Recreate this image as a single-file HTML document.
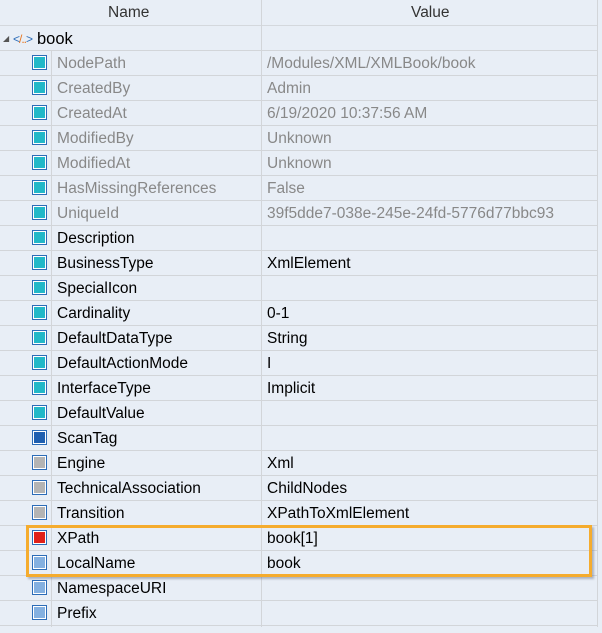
<!DOCTYPE html><html><head><style>
body{margin:0;width:602px;height:633px;background:#e8eef6;font-family:"Segoe UI","Liberation Sans",sans-serif;font-size:15.5px;position:relative;overflow:hidden}
.hd{position:absolute;top:0;left:0;width:597px;height:25px;border-bottom:1px solid #d4d8dd}
.hd div{position:absolute;top:0;line-height:25px;color:#333}
.r{position:absolute;left:0;width:597px;height:24px;border-bottom:1px solid #d2d5d9}
.n{position:absolute;left:57px;top:0;line-height:26px}
.v{position:absolute;left:267px;top:0;line-height:26px}
.g{color:#888}
.i{position:absolute;left:32px;top:4px;width:11px;height:11px;border:1px solid #2c6cb8;background:#fff;padding:1px}
.i b{display:block;width:11px;height:11px}
.vl{position:absolute;top:0;width:1px;background:#d2d5d9}
</style></head><body>
<div class="hd"><div style="left:108px">Name</div><div style="left:411px">Value</div></div>
<div class="vl" style="left:261px;height:627px"></div>
<div class="vl" style="left:597px;height:627px"></div>
<div class="vl" style="left:51px;top:51px;height:576px"></div>
<div class="r" style="top:26px"><span style="position:absolute;left:3px;top:8px;font-size:8px;color:#555">◢</span><span style="position:absolute;left:13px;top:0;line-height:26px;font-size:12px;letter-spacing:-1px;color:#2c6cb8">&lt;<span style="color:#e87722">/..</span>&gt;</span><span style="position:absolute;left:37px;top:0;line-height:27px;font-size:16.5px">book</span></div>
<div id="rows"></div>
<div style="position:absolute;left:26px;top:525px;width:560px;height:46px;border:3px solid #f5ac2e;box-shadow:2px 2px 2px rgba(80,90,110,.4)"></div>
<script>
var d=[["NodePath","/Modules/XML/XMLBook/book","#22b8c8",1],["CreatedBy","Admin","#22b8c8",1],["CreatedAt","6/19/2020 10:37:56 AM","#22b8c8",1],["ModifiedBy","Unknown","#22b8c8",1],["ModifiedAt","Unknown","#22b8c8",1],["HasMissingReferences","False","#22b8c8",1],["UniqueId","39f5dde7-038e-245e-24fd-5776d77bbc93","#22b8c8",1],["Description","","#22b8c8"],["BusinessType","XmlElement","#22b8c8"],["SpecialIcon","","#22b8c8"],["Cardinality","0-1","#22b8c8"],["DefaultDataType","String","#22b8c8"],["DefaultActionMode","I","#22b8c8"],["InterfaceType","Implicit","#22b8c8"],["DefaultValue","","#22b8c8"],["ScanTag","","#1f5fb0"],["Engine","Xml","#b4b4b4"],["TechnicalAssociation","ChildNodes","#b4b4b4"],["Transition","XPathToXmlElement","#b4b4b4"],["XPath","book[1]","#e0201a"],["LocalName","book","#84b0e0"],["NamespaceURI","","#84b0e0"],["Prefix","","#84b0e0"]];
var h="";d.forEach(function(x,k){h+='<div class="r" style="top:'+(51+25*k)+'px"><div class="i"><b style="background:'+x[2]+'"></b></div><span class="n'+(x[3]?' g':'')+'">'+x[0]+'</span><span class="v'+(x[3]?' g':'')+'">'+x[1]+'</span></div>'});
document.getElementById("rows").outerHTML=h;
</script>
</body></html>
